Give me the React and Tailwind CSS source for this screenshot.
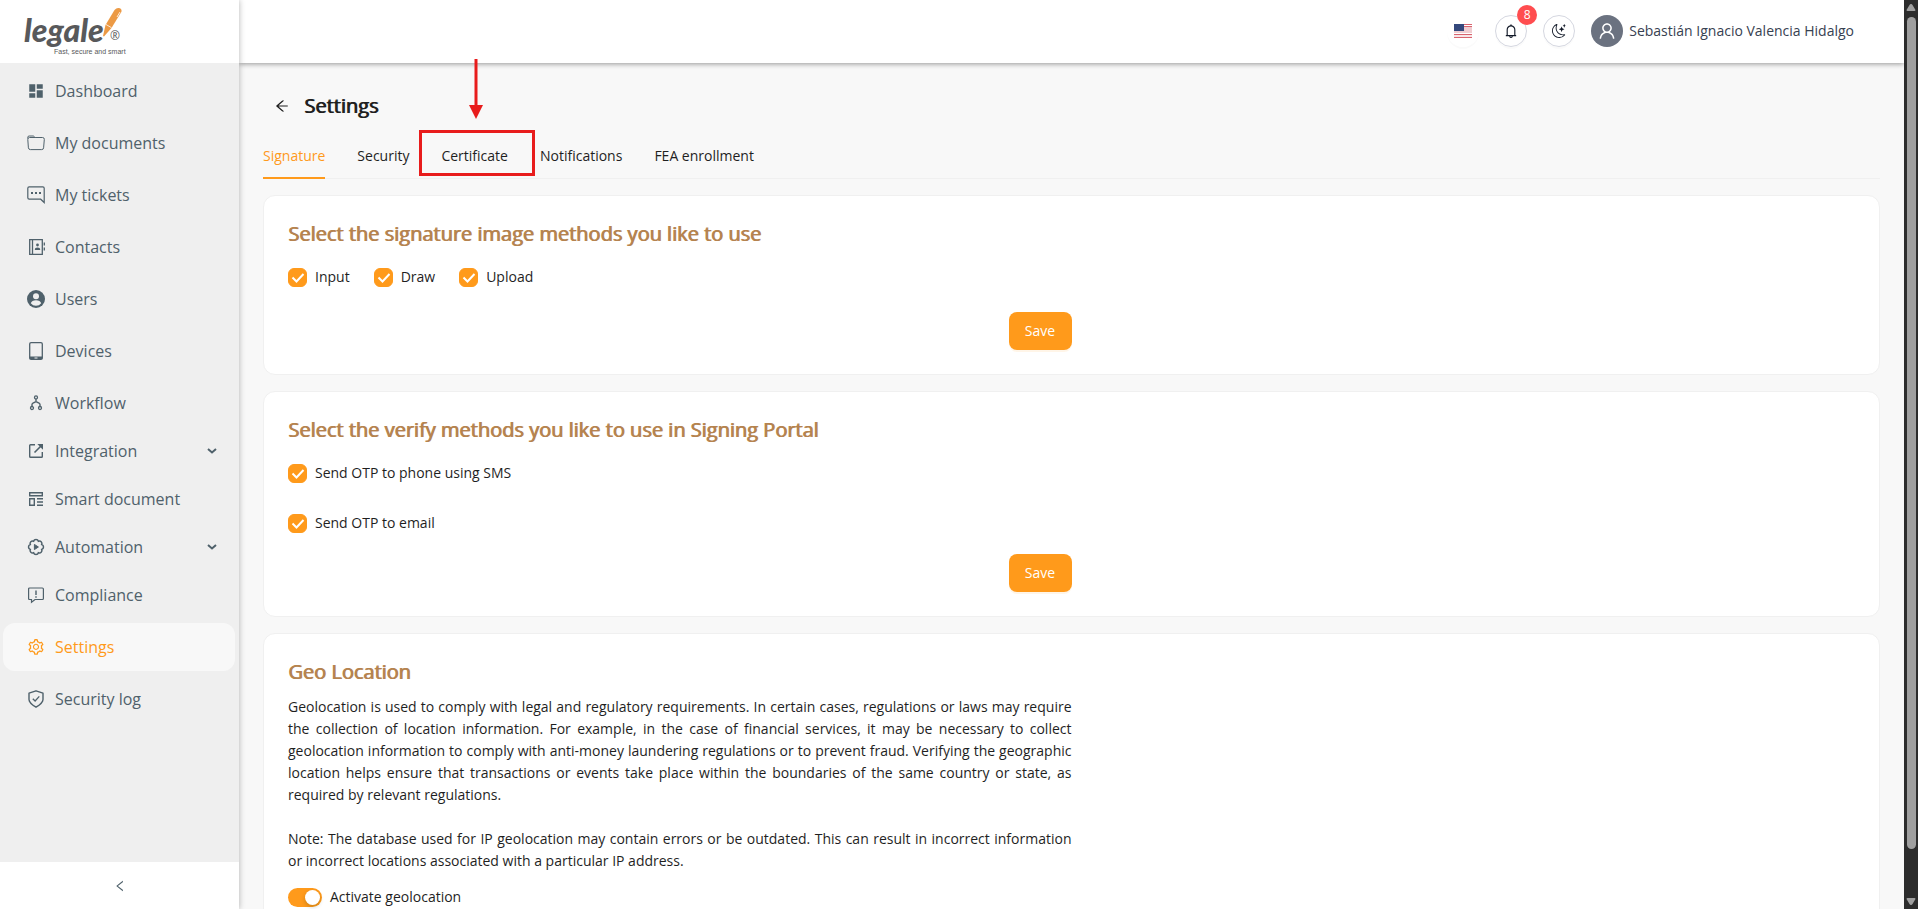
import { useState } from "react";
import { MdDashboard } from "react-icons/md";
import {
  AiOutlineSetting,
  AiOutlineArrowLeft,
  AiOutlineLeft,
  AiOutlineBell,
  AiOutlineUser,
} from "react-icons/ai";
import { BsMoonStars } from "react-icons/bs";

const icon = (paths) =>
  function Icon(props) {
    return (
      <svg viewBox="0 0 18 18" width="18" height="18" fill="none" stroke="currentColor" {...props}>
        {paths}
      </svg>
    );
  };

const FolderIcon = icon(
  <path d="M.8 4.5V3.2Q.8 2 2.2 2H6q.8 0 1.3.6l.8.9h7.4q2 0 1.8 2l-.7 8.3q-.1 1.8-1.9 1.8H3.4q-1.8 0-2-1.8L.8 5.5q0-2 1.7-2h5.6" />
);

const TicketIcon = icon(
  <>
    <path d="M.8 2.2q0-1.4 1.4-1.4h13.6q1.4 0 1.4 1.4v14.3l-3.5-3.3H2.2q-1.4 0-1.4-1.4z" strokeWidth="1.2" />
    <path d="M4 7h2M8 7h2M12 7h2" strokeWidth="1.8" />
  </>
);

const ContactsIcon = icon(
  <>
    <path d="M2.7 1.7h12.6v14.6H2.7zM5.5 1.7v14.6M17.3 4.5v3M17.3 9.5v3" strokeWidth="1.3" />
    <circle cx="10.5" cy="7" r="1.4" fill="currentColor" stroke="none" />
    <path d="M7.8 12q0-2.4 2.7-2.4t2.7 2.4z" fill="currentColor" stroke="none" />
  </>
);

const UsersIcon = icon(
  <>
    <circle cx="9" cy="9" r="9" fill="currentColor" stroke="none" />
    <circle cx="9" cy="6.3" r="3" fill="#efefef" stroke="none" />
    <path d="M3.8 13.2q1-3 5.2-3t5.2 3q-2 2.6-5.2 2.6t-5.2-2.6z" fill="#efefef" stroke="none" />
  </>
);

const DeviceIcon = icon(
  <>
    <rect x="2.7" y=".7" width="12.6" height="16.6" rx="1.4" strokeWidth="1.3" />
    <path d="M2.7 15.8h12.6" strokeWidth="2.6" />
    <path d="M7.5 16h3" stroke="#efefef" />
  </>
);

const WorkflowIcon = icon(
  <>
    <circle cx="9" cy="3.4" r="1.5" strokeWidth="1.3" />
    <circle cx="5" cy="14" r="1.5" strokeWidth="1.3" />
    <circle cx="13" cy="14" r="1.5" strokeWidth="1.3" />
    <path d="M9 5v2.6M5 12.4v-2Q5 9.6 6 9l3-1.5L12 9q1 .6 1 1.4v2" strokeWidth="1.4" />
  </>
);

const IntegrationIcon = icon(
  <>
    <path d="M8 2.7H3.5q-.8 0-.8.8v11q0 .8.8.8h11q.8 0 .8-.8V10" strokeWidth="1.4" />
    <path d="M7.5 10.5L14 4" strokeWidth="1.6" />
    <path d="M10.3 2H16v5.7z" fill="currentColor" stroke="none" />
  </>
);

const SmartIcon = icon(
  <>
    <path d="M2.7 2.7h12.6v3H2.7zM2.7 8.7h4.6v6.6H2.7z" strokeWidth="1.4" />
    <path d="M10 8.7h6M10 12h6M10 15.3h6" strokeWidth="1.4" />
  </>
);

const AutomationIcon = icon(
  <>
    <path
      d="M14.7 11.4a2.5 2.5 0 0 1-3.3 3.3a2.5 2.5 0 0 1-4.8 0a2.5 2.5 0 0 1-3.3-3.3a2.5 2.5 0 0 1 0-4.8a2.5 2.5 0 0 1 3.3-3.3a2.5 2.5 0 0 1 4.8 0a2.5 2.5 0 0 1 3.3 3.3a2.5 2.5 0 0 1 0 4.8z"
      strokeWidth="1.5"
    />
    <path d="M7.4 6.4v5.2L11.4 9z" fill="currentColor" />
  </>
);

const ComplianceIcon = icon(
  <>
    <path d="M1.6 3q0-1 1-1h12.8q1 0 1 1v9.5q0 1-1 1H8l-3.5 2.8v-2.8H2.6q-1 0-1-1z" strokeWidth="1.2" />
    <path d="M9 4.5V9M9 10.2v1.6" strokeWidth="1.4" />
  </>
);

const ShieldIcon = icon(
  <>
    <path d="M9 .8l7 2.4v6.3c0 3.5-3.5 5.600-7 7.700-3.500-2.100-7-4.200-7-7.700V3.200z" strokeWidth="1.4" strokeLinejoin="round" />
    <path d="M5.8 8.7L8.1 11l4.2-4.6" strokeWidth="1.3" />
  </>
);

const menu = [
  { label: "Dashboard", Icon: MdDashboard },
  { label: "My documents", Icon: FolderIcon },
  { label: "My tickets", Icon: TicketIcon },
  { label: "Contacts", Icon: ContactsIcon },
  { label: "Users", Icon: UsersIcon },
  { label: "Devices", Icon: DeviceIcon },
  { label: "Workflow", Icon: WorkflowIcon },
  { label: "Integration", Icon: IntegrationIcon, expandable: true, tight: true },
  { label: "Smart document", Icon: SmartIcon, tight: true },
  { label: "Automation", Icon: AutomationIcon, expandable: true, tight: true },
  { label: "Compliance", Icon: ComplianceIcon, tight: true },
  { label: "Settings", Icon: AiOutlineSetting, active: true },
  { label: "Security log", Icon: ShieldIcon },
];

const tabs = ["Signature", "Security", "Certificate", "Notifications", "FEA enrollment"];

function Logo() {
  return (
    <a href="#" className="relative block h-[63px] bg-white pt-[10px] pl-6 text-[#58595b]">
      <span className="block font-['Lato'] text-[32px] leading-10 font-black italic">legale</span>
      <svg viewBox="0 0 20 30" className="absolute top-[7px] left-[102px] h-[30px] w-5">
        <path d="M12.5 3Q15 0 18 1.3q2.5 1.5 1 4.2L9.5 21 2 29.5l-1-.6L3.5 18z" fill="#ec9a45" />
        <path d="M4 17.5l5.5 3.2M18 5l-3 5" stroke="#fff" strokeWidth=".8" />
      </svg>
      <span className="absolute top-7 left-[110px] text-xs leading-4">®</span>
      <span className="absolute top-[46px] left-[54px] font-['Liberation_Sans'] text-[7px] leading-3 whitespace-nowrap">
        Fast, secure and smart
      </span>
    </a>
  );
}

function Sidebar() {
  return (
    <aside className="z-20 flex w-[239px] shrink-0 flex-col bg-[#efefef] shadow-[0_0_6px_rgba(0,0,0,0.3)]">
      <Logo />
      <nav className="flex-1 overflow-hidden pr-1 pl-[3px]">
        {menu.map(({ label, Icon, active, expandable, tight }) => (
          <a
            key={label}
            href="#"
            className={`flex h-12 items-center gap-[10px] rounded-xl pr-[18px] pl-6 text-base ${
              tight ? "" : "mt-1"
            } ${active ? "bg-[#f8f8f8] text-[#ff9a1b]" : "text-[#4f616b]"}`}
          >
            <Icon className="size-[18px] shrink-0" />
            <span className="flex-1">{label}</span>
            {expandable && (
              <svg viewBox="0 0 10 6" className="h-[6px] w-[10px]" fill="none" stroke="currentColor" strokeWidth="2">
                <path d="M1 1l4 3.5L9 1" />
              </svg>
            )}
          </a>
        ))}
      </nav>
      <button
        type="button"
        aria-label="Collapse menu"
        className="flex h-[47px] items-center justify-center bg-white text-[#4f616b]"
      >
        <AiOutlineLeft className="size-[14px]" />
      </button>
    </aside>
  );
}

function Flag() {
  return (
    <svg viewBox="0 0 18 14" className="h-[14px] w-[18px]">
      <rect width="18" height="14" fill="#f0cdd1" />
      <path d="M0 .5h18M0 2.5h18M0 10.5h18M0 13.5h18" stroke="#d9646f" />
      <path d="M0 1.5h18M0 9.5h18M0 12h18" stroke="#fff" />
      <rect width="10" height="7" fill="#34487c" />
    </svg>
  );
}

function Header() {
  return (
    <header className="z-10 flex h-[63px] shrink-0 items-center justify-end gap-4 bg-white pr-[50px] pb-[2px] shadow-[0_1px_5px_rgba(0,0,0,0.4)]">
      <button
        type="button"
        aria-label="Language"
        className="flex size-8 items-center justify-center rounded-full shadow-[0_2px_0_rgba(0,0,0,0.02)]"
      >
        <Flag />
      </button>
      <button
        type="button"
        aria-label="Notifications"
        className="relative flex size-8 items-center justify-center rounded-full border border-[#d5d7e0] shadow-[0_2px_0_rgba(0,0,0,0.02)]"
      >
        <AiOutlineBell className="size-4 text-[#111827]" />
        <span className="absolute -top-[11px] -right-[11px] flex size-5 items-center justify-center rounded-full bg-[#ff4d4f] text-xs text-white">
          8
        </span>
      </button>
      <button
        type="button"
        aria-label="Dark mode"
        className="flex size-8 items-center justify-center rounded-full border border-[#d5d7e0] shadow-[0_2px_0_rgba(0,0,0,0.02)]"
      >
        <BsMoonStars className="size-[14px] text-[#111827]" />
      </button>
      <div className="flex items-center gap-[6px]">
        <span className="flex size-8 items-center justify-center rounded-full bg-[#6b7280] text-white">
          <AiOutlineUser className="size-5" />
        </span>
        <span className="text-sm text-[#374151]">Sebastián Ignacio Valencia Hidalgo</span>
      </div>
    </header>
  );
}

function Card({ title, children }) {
  return (
    <section className="rounded-xl border border-[#f0f0f0] bg-white p-6">
      <h2 className="text-xl leading-7 font-normal text-[#b5834f] [text-shadow:1px_0_0_#b5834f]">{title}</h2>
      {children}
    </section>
  );
}

function Checkbox({ label }) {
  const [checked, setChecked] = useState(true);
  return (
    <label className="flex items-center gap-2 text-sm leading-[22px]">
      <span className="relative flex size-[19px]">
        <input
          type="checkbox"
          checked={checked}
          onChange={() => setChecked(!checked)}
          className="size-full appearance-none rounded-md border border-[#d9d9d9] bg-white checked:border-[#ff9a1b] checked:bg-[#ff9a1b]"
        />
        {checked && (
          <svg
            viewBox="0 0 19 19"
            className="pointer-events-none absolute inset-0"
            fill="none"
            stroke="#fff"
            strokeWidth="2"
          >
            <path d="M4.5 9.5l4 4 7-7.5" />
          </svg>
        )}
      </span>
      {label}
    </label>
  );
}

function SaveButton() {
  return (
    <button
      type="button"
      className="h-[38px] w-[63px] rounded-lg bg-[#ff9a1b] text-sm text-white shadow-[0_2px_0_rgba(255,154,27,0.1)]"
    >
      Save
    </button>
  );
}

function Tabs() {
  const [current, setCurrent] = useState("Signature");
  return (
    <div role="tablist" className="mt-3 flex gap-8 border-b border-[#f0f0f0] text-sm">
      {tabs.map((tab) => (
        <button
          key={tab}
          type="button"
          role="tab"
          aria-selected={tab === current}
          onClick={() => setCurrent(tab)}
          className={`relative -mb-px h-[46px] border-b-2 pt-[2px] leading-[22px] ${
            tab === current ? "border-[#ff9a1b] text-[#ff9a1b]" : "border-transparent"
          }`}
        >
          {tab}
          {/* callout on the certificate tab, its arrow reaches over the header */}
          {tab === "Certificate" && (
            <span className="pointer-events-none absolute -top-[3px] -right-[27px] -left-[22px] z-20 h-[46px] border-3 border-[#e81c1c]">
              <svg viewBox="0 0 14 60" className="absolute bottom-[54px] left-[47px] h-[60px] w-[14px]">
                <path d="M7 0v48" stroke="#e81c1c" strokeWidth="3" />
                <path d="M0 46h14L7 60z" fill="#e81c1c" />
              </svg>
            </span>
          )}
        </button>
      ))}
    </div>
  );
}

function PageScrollbar() {
  return (
    <div aria-hidden="true" className="z-30 flex w-[14px] shrink-0 flex-col items-center bg-[#2c2c2c] py-1">
      <svg viewBox="0 0 10 7" className="h-[7px] w-[10px] shrink-0">
        <path d="M5 0q1 0 1.5 1L9.5 6q0 1-1 1h-7q-1 0-1-1l3-5Q4 0 5 0z" fill="#9f9f9f" />
      </svg>
      <div className="mt-[6px] mb-[49px] w-[9px] flex-1 rounded-full bg-[#9f9f9f]" />
      <svg viewBox="0 0 10 7" className="h-[7px] w-[10px] shrink-0">
        <path d="M5 7q1 0 1.5-1L9.5 1q0-1-1-1h-7q-1 0-1 1l3 5Q4 7 5 7z" fill="#9f9f9f" />
      </svg>
    </div>
  );
}

export default function App() {
  return (
    <div className="flex h-screen overflow-hidden bg-[#f8f8f8] font-['Open_Sans',sans-serif] text-[#1f1f1f]">
      <Sidebar />
      <div className="flex min-w-0 flex-1 flex-col">
        <Header />
        <main className="min-h-0 flex-1 px-6 pt-7">
          <div className="flex items-center gap-[14px] pl-[11px]">
            <button type="button" aria-label="Back">
              <AiOutlineArrowLeft className="size-4" />
            </button>
            <h1 className="text-xl leading-[30px] font-normal [text-shadow:1px_0_0_#1f1f1f]">Settings</h1>
          </div>
          <Tabs />

          <div className="mt-4 flex flex-col gap-4">
            <Card title="Select the signature image methods you like to use">
              <div className="w-1/2">
                <div className="mt-[18px] flex gap-6">
                  <Checkbox label="Input" />
                  <Checkbox label="Draw" />
                  <Checkbox label="Upload" />
                </div>
                <div className="mt-6 flex justify-end">
                  <SaveButton />
                </div>
              </div>
            </Card>

            <Card title="Select the verify methods you like to use in Signing Portal">
              <div className="w-1/2">
                <div className="mt-[18px] flex flex-col gap-7">
                  <Checkbox label="Send OTP to phone using SMS" />
                  <Checkbox label="Send OTP to email" />
                </div>
                <div className="mt-5 flex justify-end">
                  <SaveButton />
                </div>
              </div>
            </Card>

            <Card title="Geo Location">
              <div className="mt-[10px] w-1/2 text-justify text-sm leading-[22px]">
                <p>
                  Geolocation is used to comply with legal and regulatory requirements. In certain cases, regulations
                  or laws may require the collection of location information. For example, in the case of financial
                  services, it may be necessary to collect geolocation information to comply with anti-money laundering
                  regulations or to prevent fraud. Verifying the geographic location helps ensure that transactions or
                  events take place within the boundaries of the same country or state, as required by relevant
                  regulations.
                </p>
                <p className="mt-[22px]">
                  Note: The database used for IP geolocation may contain errors or be outdated. This can result in
                  incorrect information or incorrect locations associated with a particular IP address.
                </p>
              </div>
              <label className="mt-[14px] flex w-fit items-center gap-2 text-sm leading-[22px]">
                <span className="relative flex h-[19px] w-[34px]">
                  <input
                    type="checkbox"
                    role="switch"
                    defaultChecked
                    className="peer size-full appearance-none rounded-full bg-[#bfbfbf] checked:bg-[#ff9a1b]"
                  />
                  <span className="pointer-events-none absolute top-[2px] left-[2px] size-[15px] rounded-full bg-white shadow-[0_2px_4px_rgba(0,35,11,0.2)] peer-checked:left-[17px]" />
                </span>
                Activate geolocation
              </label>
            </Card>
          </div>
        </main>
      </div>
      <PageScrollbar />
    </div>
  );
}
